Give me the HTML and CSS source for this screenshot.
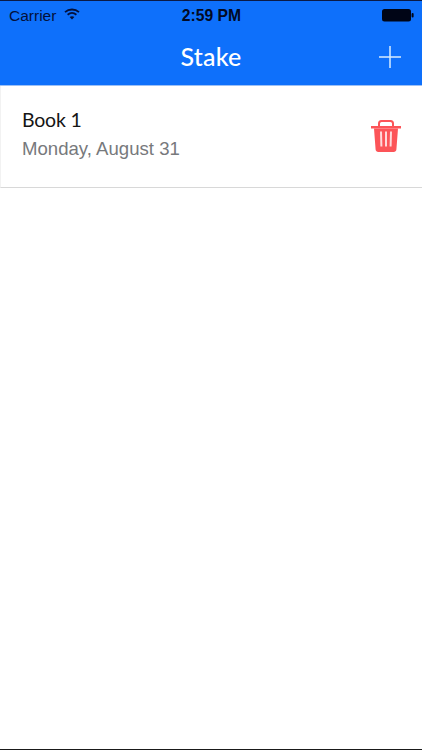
FILE: index.html
```html
<!DOCTYPE html>
<html lang="en">
<head>
<meta charset="utf-8">
<title>Stake</title>
<link rel="stylesheet" href="styles.css">
</head>
<body>
<div class="screen">
  <header class="header">
    <div class="status">
      <div class="status-left">
        <span>Carrier</span>
        <svg class="wifi" width="16" height="12" viewBox="0 0 16 12"><path d="M1 4.200C5 .6 11 .6 15 4.200" fill="none" stroke="#04103a" stroke-width="1.8"/><path d="M3.600 6.800c2.600-2.200 6.200-2.200 8.800 0" fill="none" stroke="#04103a" stroke-width="1.8"/><path d="M8 11.600 5.600 9c1.400-1 3.400-1 4.800 0z" fill="#04103a"/></svg>
      </div>
      <span class="clock">2:59 PM</span>
      <svg class="battery" width="32" height="13" viewBox="0 0 32 13"><rect x="0" y="0" width="29" height="12.500" rx="2.500" fill="#000516"/><rect x="29.600" y="4" width="2" height="4.500" rx="1" fill="#000516"/></svg>
    </div>
    <div class="nav">
      <h1 class="title">Stake</h1>
      <svg class="add" width="22" height="22" viewBox="0 0 22 22"><path d="M11 0v22M0 11h22" stroke="#d8ecff" stroke-width="1.5" fill="none"/></svg>
    </div>
  </header>
  <main class="list">
    <article class="row">
      <div class="row-text">
        <div class="row-title">Book 1</div>
        <div class="row-date">Monday, August 31</div>
      </div>
      <svg class="trash" width="30" height="32" viewBox="0 0 30 32">
        <path d="M8 6.500V3.500C8 2 9 1 10.500 1h9C21 1 22 2 22 3.500v3" fill="none" stroke="#fc5458" stroke-width="2"/>
        <path d="M0 6h30v2.500H0z" fill="#fc5458"/>
        <path d="M3 8.500h24l-1.600 21c-.1 1.500-1.200 2.500-2.700 2.500H7.300c-1.500 0-2.600-1-2.700-2.500z" fill="#fc5458"/>
        <path d="M10 11.500l.4 15M15 11.500v15M20 11.500l-.4 15" stroke="#ffd9da" stroke-width="2" fill="none"/>
      </svg>
    </article>
  </main>
</div>
</body>
</html>
```
FILE: styles.css
```css
* { box-sizing: border-box; margin: 0; padding: 0; }
html, body { height: 100%; }
body { background: #fff; font-family: "Liberation Sans", Arial, sans-serif; overflow: hidden; }
.screen { height: 750px; display: flex; flex-direction: column; border-top: 1px solid #0b1a45; border-bottom: 1px solid #1a1a1a; }
.header { height: 85px; background: #0e70fb; display: flex; flex-direction: column; border-bottom: 1px solid #9cc0f5; }
.status { height: 29px; padding: 0 8px 0 9px; display: grid; grid-template-columns: 1fr auto 1fr; align-items: center; color: #04103a; font-size: 15.5px; }
.status-left { display: flex; align-items: center; gap: 8px; }
.wifi { margin-top: -3px; }
.clock { font-weight: 700; color: #020a24; font-size: 15.7px; }
.battery { justify-self: end; display: block; }
.nav { flex: 1; display: flex; align-items: center; justify-content: center; position: relative; padding-bottom: 4px; }
.title { font-family: "Lato", sans-serif; font-size: 25px; font-weight: 500; color: #fff; letter-spacing: 0.2px; }
.add { position: absolute; right: 21px; top: 16px; }
.list { flex: 1; }
.row { height: 102px; display: flex; align-items: center; justify-content: space-between; padding: 0 21px; border-left: 1px solid #f2f2f2; border-bottom: 1px solid #d8d8d8; }
.row-text { margin-top: -2px; }
.row-title { font-family: "Lato", sans-serif; font-size: 19.5px; letter-spacing: -0.2px; color: #151515; line-height: 26px; margin-top: -4px; }
.row-date { font-size: 18.6px; color: #77797c; line-height: 22px; margin-top: 5px; }
.trash { display: block; margin-top: -1px; }
```
